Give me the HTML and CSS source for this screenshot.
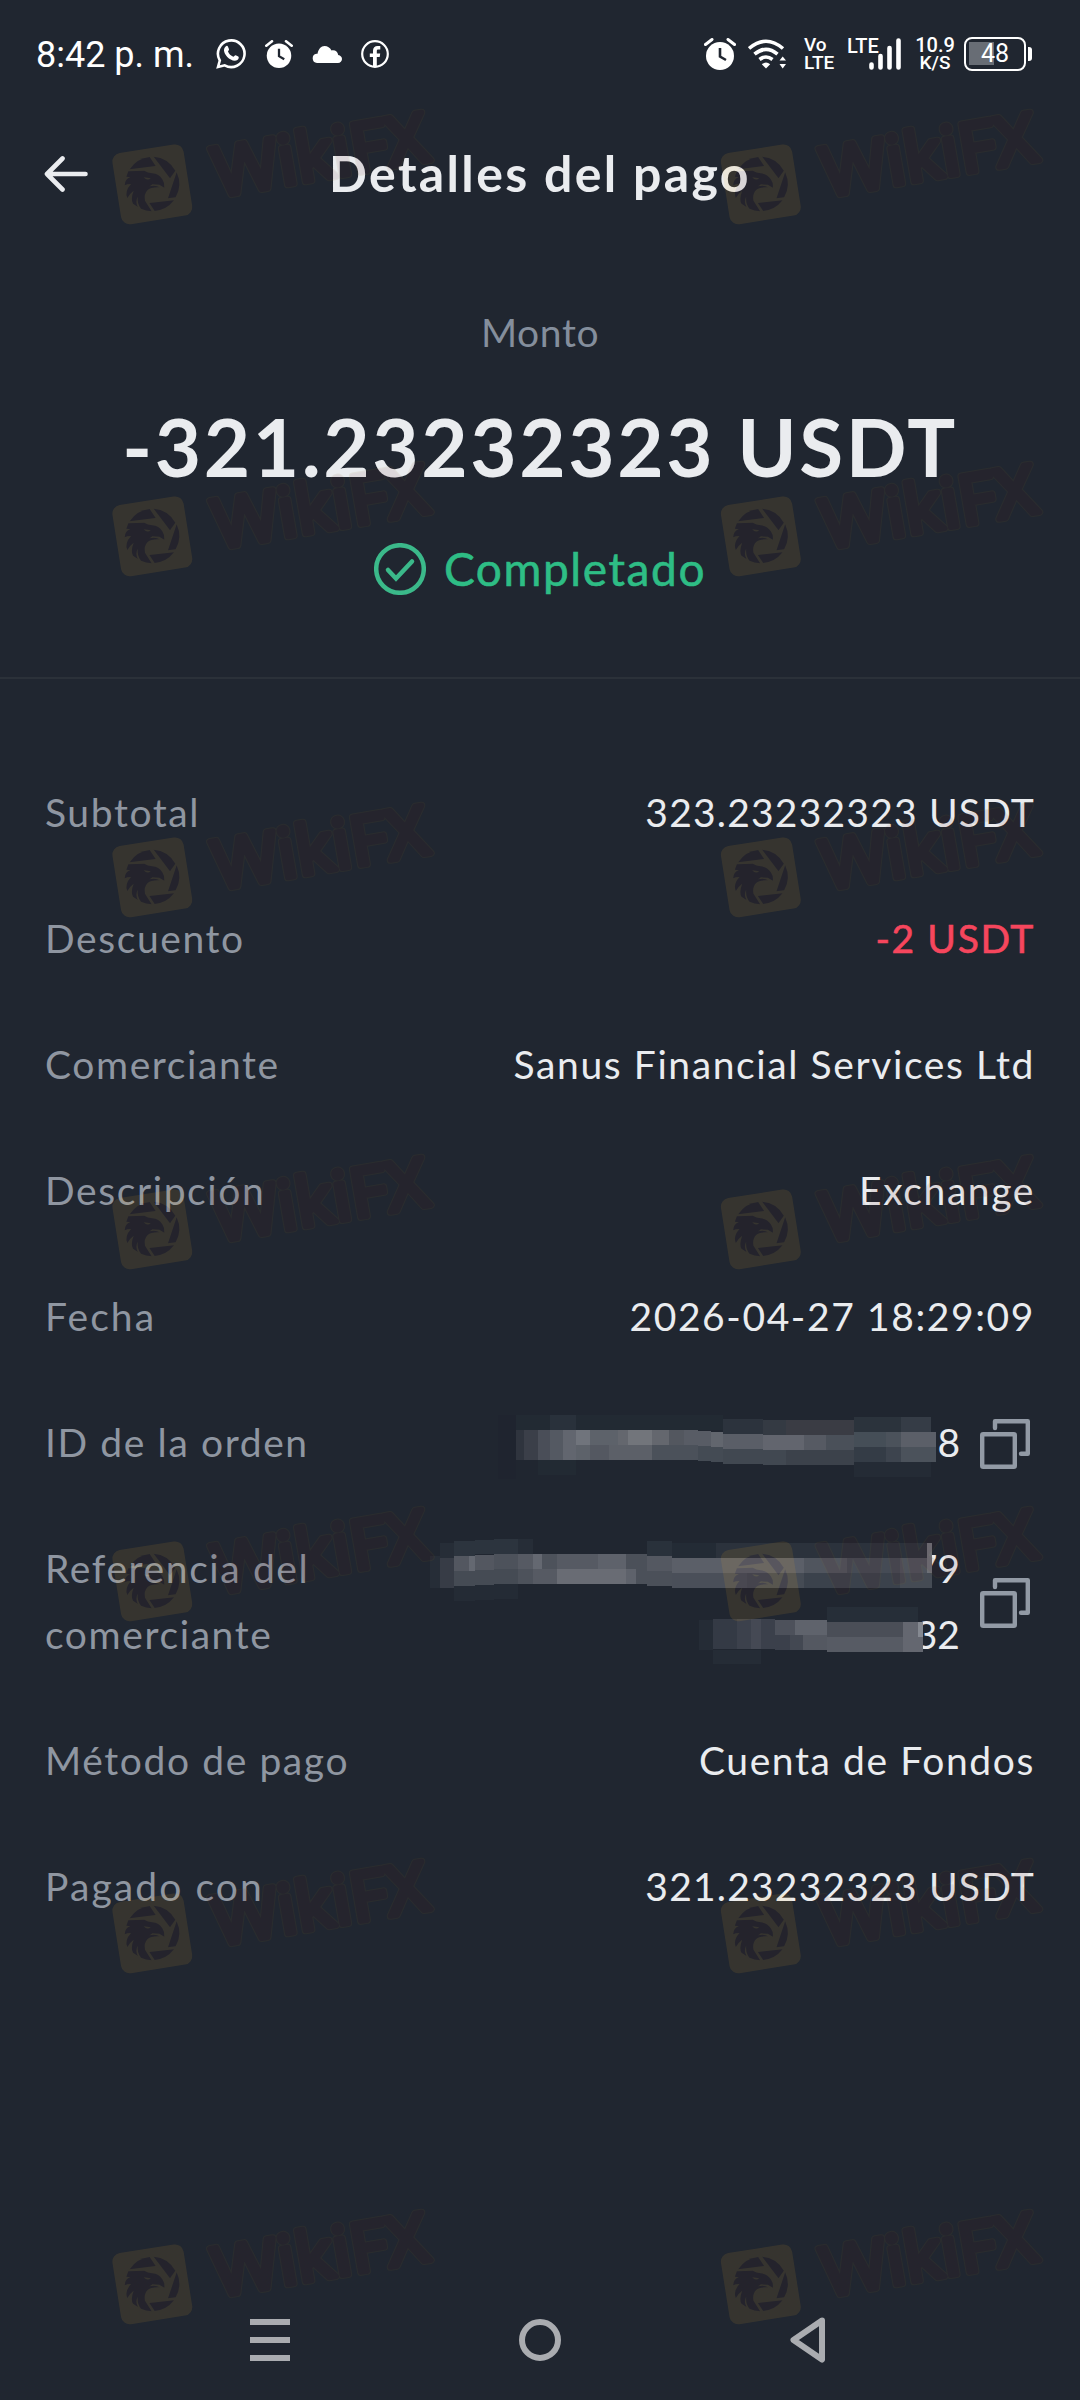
FILE: index.html
```html
<!DOCTYPE html>
<html lang="es">
<head>
  <meta charset="UTF-8" />
  <meta name="viewport" content="width=device-width, initial-scale=1.0"/>
  <title>Detalles del pago</title>
  <link rel="stylesheet" href="styles.css">
</head>
<body>
  <svg class="defs" width="0" height="0">
    <symbol id="alarm" viewBox="0 0 32 32">
      <circle cx="16" cy="18" r="14" fill="#fff"/>
      <path d="M1.5 6.5 8 1.5M30.5 6.5 24 1.5" stroke="#fff" stroke-width="3" stroke-linecap="round"/>
      <path d="M16 10v8.5l6 3.5" fill="none" stroke="#202630" stroke-width="2.6"/>
    </symbol>
    <symbol id="copy" viewBox="0 0 50 50">
      <rect x="2.2" y="15.2" width="32.6" height="32.6" rx="1"/>
      <path d="M15 9V2.2h32.8v32.6H41"/>
    </symbol>
    <symbol id="watermark" viewBox="30 -60 1000 360">
      <g opacity=".1">
        <rect x="49" y="61" width="216" height="216" rx="26" transform="rotate(-9 157 169)" fill="#fab428"/>
        <g transform="translate(15 30)" fill="#481212">
          <!-- shutter blades -->
          <path d="M74 94A82 82 0 0 1 134 57L152 84Z"/>
          <path d="M146 56A82 82 0 0 1 211 98L195 121Z"/>
          <path d="M215 103A82 82 0 0 1 212 178L189 181Z"/>
          <path d="M207 187A82 82 0 0 1 149 219L133 195Z"/>
          <!-- eagle head -->
          <path d="M70 100 118 98Q128 104 142 106Q162 108 172 124Q180 136 178 149L163 140 142 139Q138 143 133 145Q152 140 164 148Q138 147 128 156Q116 168 120 188L140 220Q122 218 108 212Q96 198 98 176Q90 192 99 207L84 197Q76 184 86 158Q73 168 67 180Q58 160 78 138Q66 138 59 142Q60 122 76 118L64 116Z"/>
          <path d="M116 118 137 121Q127 130 116 118Z" fill="#fab428"/>
        </g>
      </g>
      <g class="wordmark" transform="translate(352 206) rotate(-9.7)">
        <text class="wm-line" textLength="650" lengthAdjust="spacingAndGlyphs">WikiFX</text>
        <text class="wm-fill" textLength="650" lengthAdjust="spacingAndGlyphs">WikiFX</text>
      </g>
    </symbol>
  </svg>

  <div class="screen">
    <div class="status">
      <span class="time">8:42 p. m.</span>
      <svg class="whatsapp" viewBox="0 0 30 30" width="30" height="30">
        <path d="M2 28 3.8 21.5A13.3 13.3 0 1 1 8.7 26.3Z" fill="none" stroke="#fff" stroke-width="2.6"/>
        <path d="M9.6 7.5c1-1 2-.8 2.4.2l1 2.5c.3.8-.9 1.6-1 2.3 1 2.5 2.8 4.2 5.3 5.2.8-.2 1.5-1.8 2.4-1.5l2.6 1.3c1 .6.3 2.7-.9 3.5-3 1.800-7.400-.2-10.100-3-2.600-2.800-5-7.500-1.700-10.500z" fill="#fff"/>
      </svg>
      <svg class="alarm-small" width="28" height="28"><use href="#alarm"/></svg>
      <svg class="cloud" viewBox="0 0 30 17" width="30" height="17">
        <path d="M5 17a4.700 4.700 0 0 1-.5-9.300h1C6.500 3 9 0 12.500 0c3 0 5.600 1.500 7 4.500 3.500-.8 6.200 1 6.700 4.500C28.600 9.500 30 11 30 13s-1.700 4-4 4z" fill="#fff"/>
      </svg>
      <svg viewBox="0 0 28 28" width="28" height="28">
        <circle cx="14" cy="14" r="12.8" fill="none" stroke="#fff" stroke-width="2.2"/>
        <path d="M12 27V17H8.800v-3.600H12v-2.600c0-3.200 1.800-4.800 4.600-4.800h2.700v3.400h-2c-1.200 0-1.500.5-1.500 1.600v2.400h3.400l-.5 3.600h-2.900V27z" fill="#fff"/>
      </svg>

      <svg class="alarm" width="32" height="32"><use href="#alarm"/></svg>
      <svg class="wifi" viewBox="0 0 38 30" width="38" height="30">
        <g fill="none" stroke="#fff" stroke-width="3.6">
          <path d="M1 9.5Q18 -5 35 9.5M6.500 15.200Q18 5.500 29.500 15.200M11.500 20.500Q18 15.500 24.500 20.500"/>
        </g>
        <path d="M18 29.500 13.800 25.300Q18 21.800 22.200 25.300ZM31.500 21.500 34.700 17.500 38 21.500ZM31.500 25 34.700 29.500 38 25Z" fill="#fff"/>
      </svg>
      <div class="tiny volte"><span>Vo</span><span>LTE</span></div>
      <div class="signal">
        <span>LTE</span>
        <svg viewBox="0 0 32 32" width="32" height="32">
          <path d="M2.500 26.500v3M11.500 18v11.500M20.500 10v19.500M29.500 2.500v27" stroke="#fff" stroke-width="4.600" stroke-linecap="round"/>
        </svg>
      </div>
      <div class="tiny speed"><span>10.9</span><span>K/S</span></div>
      <div class="battery"><span>48</span></div>
      <i class="nub"></i>
    </div>

    <header class="topbar">
      <svg viewBox="0 0 44 36" width="44" height="36">
        <path d="M18.500 2.500 3 18 18.500 33.500M3 18H41.500" fill="none" stroke="#eaecef" stroke-width="4.600" stroke-linecap="round" stroke-linejoin="round"/>
      </svg>
      <h1>Detalles del pago</h1>
    </header>

    <section class="summary">
      <div class="caption">Monto</div>
      <div class="amount">-321.23232323 USDT</div>
      <div class="state">
        <svg viewBox="0 0 52 52" width="52" height="52">
          <circle cx="26" cy="26" r="23.8"/>
          <path d="M14 27 22 35.500 38 18.500" stroke-linecap="round"/>
        </svg>
        <span>Completado</span>
      </div>
    </section>

    <section class="details">
      <div class="row"><span class="label">Subtotal</span><span class="value num">323.23232323 USDT</span></div>
      <div class="row"><span class="label">Descuento</span><span class="value minus">-2 USDT</span></div>
      <div class="row"><span class="label">Comerciante</span><span class="value">Sanus Financial Services Ltd</span></div>
      <div class="row"><span class="label">Descripción</span><span class="value">Exchange</span></div>
      <div class="row"><span class="label wide">Fecha</span><span class="value">2026-04-27 18:29:09</span></div>
      <div class="row">
        <span class="label">ID de la orden</span>
        <div class="hidden-value">
          <div class="line">
            <svg class="mosaic" viewBox="501 1409 440 66" width="440" height="66">
              <path fill="#1f242f" d="M502 1415h18v64h-18z"/>
              <path fill="#222a33" d="M520 1415h207v15h-207zM542 1460h38v15h-38z"/>
              <path fill="#29313b" d="M554 1415h26v15h-26z"/>
              <path fill="#2f343e" d="M520 1430h8v30h-8z"/>
              <path fill="#3b3f49" d="M528 1430h14v30h-14z"/>
              <path fill="#4a4e58" d="M542 1430h12v30h-12z"/>
              <path fill="#545962" d="M554 1430h13v30h-13z"/>
              <path fill="#62666f" d="M567 1430h13v30h-13z"/>
              <path fill="#70747c" d="M580 1430h14v15h-14z"/>
              <path fill="#5d626a" d="M580 1445h14v15h-14zM594 1430h28v15h-28z"/>
              <path fill="#545861" d="M594 1445h19v15h-19z"/>
              <path fill="#5c6068" d="M613 1445h43v15h-43z"/>
              <path fill="#64676e" d="M622 1430h10v15h-10zM656 1430h17v15h-17z"/>
              <path fill="#72757b" d="M632 1430h24v15h-24z"/>
              <path fill="#53575f" d="M673 1430h15v15h-15z"/>
              <path fill="#4b515a" d="M656 1445h46v15h-46z"/>
              <path fill="#585c65" d="M688 1430h14v15h-14zM702 1431h13v15h-13z"/>
              <path fill="#444b54" d="M702 1446h13v15h-13zM715 1447h12v15h-12z"/>
              <path fill="#62666e" d="M715 1432h12v15h-12z"/>
              <path fill="#2c333d" d="M727 1419h40v15h-40z"/>
              <path fill="#5a5e67" d="M727 1434h40v15h-40z"/>
              <path fill="#414851" d="M727 1449h40v15h-40zM767 1450h23v15h-23z"/>
              <path fill="#343a43" d="M767 1420h23v15h-23z"/>
              <path fill="#62656e" d="M767 1435h41v15h-41z"/>
              <path fill="#3a3c44" d="M790 1420h68v15h-68z"/>
              <path fill="#565a63" d="M808 1435h22v15h-22z"/>
              <path fill="#4a5059" d="M830 1435h28v15h-28z"/>
              <path fill="#3c424b" d="M790 1450h68v15h-68z"/>
              <path fill="#2b333c" d="M858 1417h47v15h-47z"/>
              <path fill="#454e57" d="M858 1432h32v15h-32z"/>
              <path fill="#343c46" d="M858 1447h32v15h-32z"/>
              <path fill="#4b525b" d="M890 1432h15v15h-15zM905 1447h35v15h-35z"/>
              <path fill="#3d444e" d="M890 1447h15v15h-15z"/>
              <path fill="#353c46" d="M905 1417h30v15h-30z"/>
              <path fill="#5b5f68" d="M905 1432h35v15h-35z"/>
              <path fill="#242b35" d="M858 1462h77v15h-77z"/>
            </svg>
            <span class="tail">8</span>
          </div>
        </div>
        <svg class="copy" width="50" height="50"><use href="#copy"/></svg>
      </div>
      <div class="row two">
        <span class="label">Referencia del<br>comerciante</span>
        <div class="hidden-value">
          <div class="line">
            <svg class="mosaic over" viewBox="431 1535 502 66" width="502" height="66">
              <path fill="#262d37" d="M430 1556h10v32h-10zM440 1543h14v15h-14zM518 1539h15v15h-15z"/>
              <path fill="#2c343e" d="M454 1541h21v15h-21zM475 1540h19v14h-19zM494 1539h24v15h-24z"/>
              <path fill="#373c46" d="M440 1558h14v30h-14z"/>
              <path fill="#535760" d="M454 1556h15v15h-15zM475 1555h19v15h-19z"/>
              <path fill="#646871" d="M469 1556h6v15h-6zM533 1554h9v15h-9z"/>
              <path fill="#454b54" d="M454 1571h21v15h-21zM475 1570h19v15h-19zM494 1569h24v15h-24z"/>
              <path fill="#4d525b" d="M494 1554h24v15h-24zM518 1569h15v15h-15zM542 1554h15v15h-15z"/>
              <path fill="#565a63" d="M518 1554h15v15h-15zM533 1569h24v15h-24zM557 1554h41v15h-41z"/>
              <path fill="#242b35" d="M454 1586h21v15h-21zM475 1585h19v15h-19zM494 1584h24v15h-24z"/>
              <path fill="#5e626b" d="M598 1554h28v15h-28zM626 1569h10v15h-10z"/>
              <path fill="#696c74" d="M557 1569h69v15h-69z"/>
              <path fill="#4b5059" d="M626 1554h21v15h-21zM636 1569h11v15h-11zM647 1571h25v15h-25z"/>
              <path fill="#29313b" d="M647 1541h25v15h-25z"/>
              <path fill="#545861" d="M647 1556h25v15h-25z"/>
              <path fill="#232b35" d="M672 1543h44v15h-44z"/>
              <path fill="#5b5f68" d="M672 1558h132v15h-132z"/>
              <path fill="#4a4f59" d="M672 1573h75v15h-75z"/>
              <path fill="#2b323c" d="M716 1543h216v15h-216z"/>
              <path fill="#454b54" d="M747 1573h57v15h-57zM900 1573h32v15h-32z"/>
              <path fill="#50555e" d="M804 1558h43v15h-43z"/>
              <path fill="#454b55" d="M847 1558h53v15h-53z"/>
              <path fill="#3b424c" d="M804 1573h96v15h-96z"/>
              <path fill="#4e535c" d="M900 1558h27v15h-27z"/>
              <path fill="#6c7078" d="M927 1543h5v30h-5z"/>
            </svg>
            <span class="tail">79</span>
          </div>
          <div class="line">
            <svg class="mosaic over second" viewBox="696 1601 229 66" width="229" height="66">
              <path fill="#252c36" d="M700 1620h14v30h-14zM714 1650h48v14h-48z"/>
              <path fill="#343a45" d="M714 1619h24v30h-24z"/>
              <path fill="#3c414c" d="M738 1619h23v30h-23z"/>
              <path fill="#454954" d="M752 1619h10v30h-10z"/>
              <path fill="#3b404b" d="M762 1619h14v30h-14zM776 1635h15v15h-15z"/>
              <path fill="#4d515b" d="M776 1620h20v15h-20z"/>
              <path fill="#434852" d="M791 1635h13v15h-13z"/>
              <path fill="#5f636c" d="M796 1620h32v15h-32z"/>
              <path fill="#545861" d="M804 1635h24v15h-24z"/>
              <path fill="#262e38" d="M828 1607h91v15h-91z"/>
              <path fill="#4a4e57" d="M828 1622h76v15h-76z"/>
              <path fill="#575b64" d="M828 1637h76v15h-76z"/>
              <path fill="#646770" d="M904 1622h20v30h-20z"/>
              <path fill="#858991" d="M919 1622h5v15h-5z"/>
            </svg>
            <span class="tail">32</span>
          </div>
        </div>
        <svg class="copy" width="50" height="50"><use href="#copy"/></svg>
      </div>
      <div class="row"><span class="label">Método de pago</span><span class="value">Cuenta de Fondos</span></div>
      <div class="row"><span class="label wide">Pagado con</span><span class="value num">321.23232323 USDT</span></div>
    </section>

    <nav class="navbar">
      <svg viewBox="0 0 40 42" width="40" height="42"><path d="M0 3h40M0 21h40M0 39h40"/></svg>
      <svg viewBox="0 0 42 42" width="42" height="42"><circle cx="21" cy="21" r="18"/></svg>
      <svg viewBox="0 0 36 46" width="36" height="46"><path d="M32 3.500 3.500 23 32 42.500Z"/></svg>
    </nav>

    <svg class="watermarks" viewBox="0 0 1080 2400" width="1080" height="2400">
      <g id="wm-column">
        <use href="#watermark" x="110" y="108" width="333.3" height="120"/>
        <use href="#watermark" x="110" y="460" width="333.3" height="120"/>
        <use href="#watermark" x="110" y="801" width="333.3" height="120"/>
        <use href="#watermark" x="110" y="1153" width="333.3" height="120"/>
        <use href="#watermark" x="110" y="1505" width="333.3" height="120"/>
        <use href="#watermark" x="110" y="1857" width="333.3" height="120"/>
        <use href="#watermark" x="110" y="2208" width="333.3" height="120"/>
      </g>
      <use href="#wm-column" x="608.5"/>
    </svg>
  </div>
</body>
</html>
```
FILE: styles.css
```css
* { box-sizing: border-box; }
body { margin: 0; background: #202630; color: #eaecef; font-family: Lato, "Open Sans", sans-serif; }
svg { display: block; flex: none; }
symbol { overflow: visible; }
.defs { position: absolute; }
.screen { position: relative; width: 1080px; height: 2400px; overflow: hidden; display: flex; flex-direction: column; }

/* status bar */
.status { height: 108px; padding: 0 48px 0 36px; display: flex; align-items: center; color: #fff; font-family: Roboto, sans-serif; }
.time { width: 180px; font-size: 36px; line-height: 42px; padding-top: 2px; white-space: nowrap; }
.alarm-small { margin-left: 19px; }
.cloud { margin: 0 19px; }
.alarm { margin-left: auto; }
.wifi { margin-left: 12px; }
.tiny { display: flex; flex-direction: column; align-items: center; font-weight: 500; line-height: 18px; font-size: 19px; }
.volte { width: 31px; margin-left: 18px; align-items: flex-start; }
.signal { width: 54px; margin-left: 12px; display: flex; align-items: flex-start; font-weight: 500; font-size: 20px; line-height: 16px; }
.signal span { width: 22px; white-space: nowrap; }
.speed { width: 40px; margin-left: 14px; }
.speed span:first-child { font-size: 20px; }
.battery { width: 62px; height: 34px; margin-left: 9px; border: 2.5px solid #fff; border-radius: 8px; display: flex; align-items: center; justify-content: center; font-size: 25px; line-height: 28px; background: linear-gradient(#686d75, #686d75) 3px 3px / 25px 23px no-repeat; }
.nub { width: 4px; height: 14px; margin-left: 2px; background: #fff; border-radius: 0 3px 3px 0; }

/* header */
.topbar { height: 132px; padding: 0 44px; display: grid; grid-template-columns: 44px 1fr 44px; align-items: center; }
h1 { margin: 0; padding-bottom: 3px; font-size: 50px; font-weight: 700; line-height: 60px; letter-spacing: 2.35px; text-align: center; white-space: nowrap; }

/* amount */
.summary { height: 439px; padding-top: 59px; border-bottom: 2px solid #2b3139; display: flex; flex-direction: column; align-items: center; }
.caption { font-size: 39px; line-height: 66px; letter-spacing: .6px; color: #848e9c; }
.amount { margin-top: 33px; font-size: 80px; font-weight: 700; line-height: 96px; letter-spacing: 2.6px; white-space: nowrap; }
.state { margin-top: 45px; display: flex; align-items: center; gap: 18px; color: #2ebd85; font-size: 46px; line-height: 60px; letter-spacing: 1.6px; -webkit-text-stroke: .6px #2ebd85; }
.state svg { fill: none; stroke: #3bb98a; stroke-width: 4.5; }

/* detail rows */
.details { padding: 100px 45px 0 45px; display: flex; flex-direction: column; gap: 60px; font-size: 39px; line-height: 66px; }
.row { display: flex; align-items: flex-start; }
.label { flex: 1; color: #8f96a1; letter-spacing: 1.6px; white-space: nowrap; }
.wide { letter-spacing: 2.1px; }
.value { letter-spacing: 1.6px; white-space: nowrap; }
.num { letter-spacing: 1.2px; }
.minus { color: #f6465d; -webkit-text-stroke: .6px #f6465d; }
.hidden-value { display: flex; flex-direction: column; align-items: flex-end; }
.line { display: flex; height: 66px; }
.mosaic { overflow: visible; position: relative; shape-rendering: crispEdges; }
.mosaic.over { margin-right: -18px; }
.mosaic.second { margin-right: -9px; }
.copy { margin: 10px 5px 0 20px; fill: none; stroke: #929aa5; stroke-width: 4.4; stroke-linejoin: round; stroke-linecap: round; }
.two { align-items: center; }
.two .copy { margin-top: 4px; }

/* android buttons */
.navbar { margin-top: auto; height: 120px; padding: 0 254px 0 250px; display: flex; justify-content: space-between; align-items: center; }
.navbar svg { fill: none; stroke: #aaacb0; stroke-width: 6; stroke-linejoin: round; }

.watermarks { position: absolute; top: 0; left: 0; pointer-events: none; }
.wordmark { font-family: "Open Sans", sans-serif; font-weight: 400; font-size: 204px; stroke-linejoin: round; stroke-linecap: round; opacity: .09; }
.wm-line { fill: #8a6a20; stroke: #8a6a20; stroke-width: 23px; }
.wm-fill { fill: #5a1212; stroke: #5a1212; stroke-width: 17px; }
```
